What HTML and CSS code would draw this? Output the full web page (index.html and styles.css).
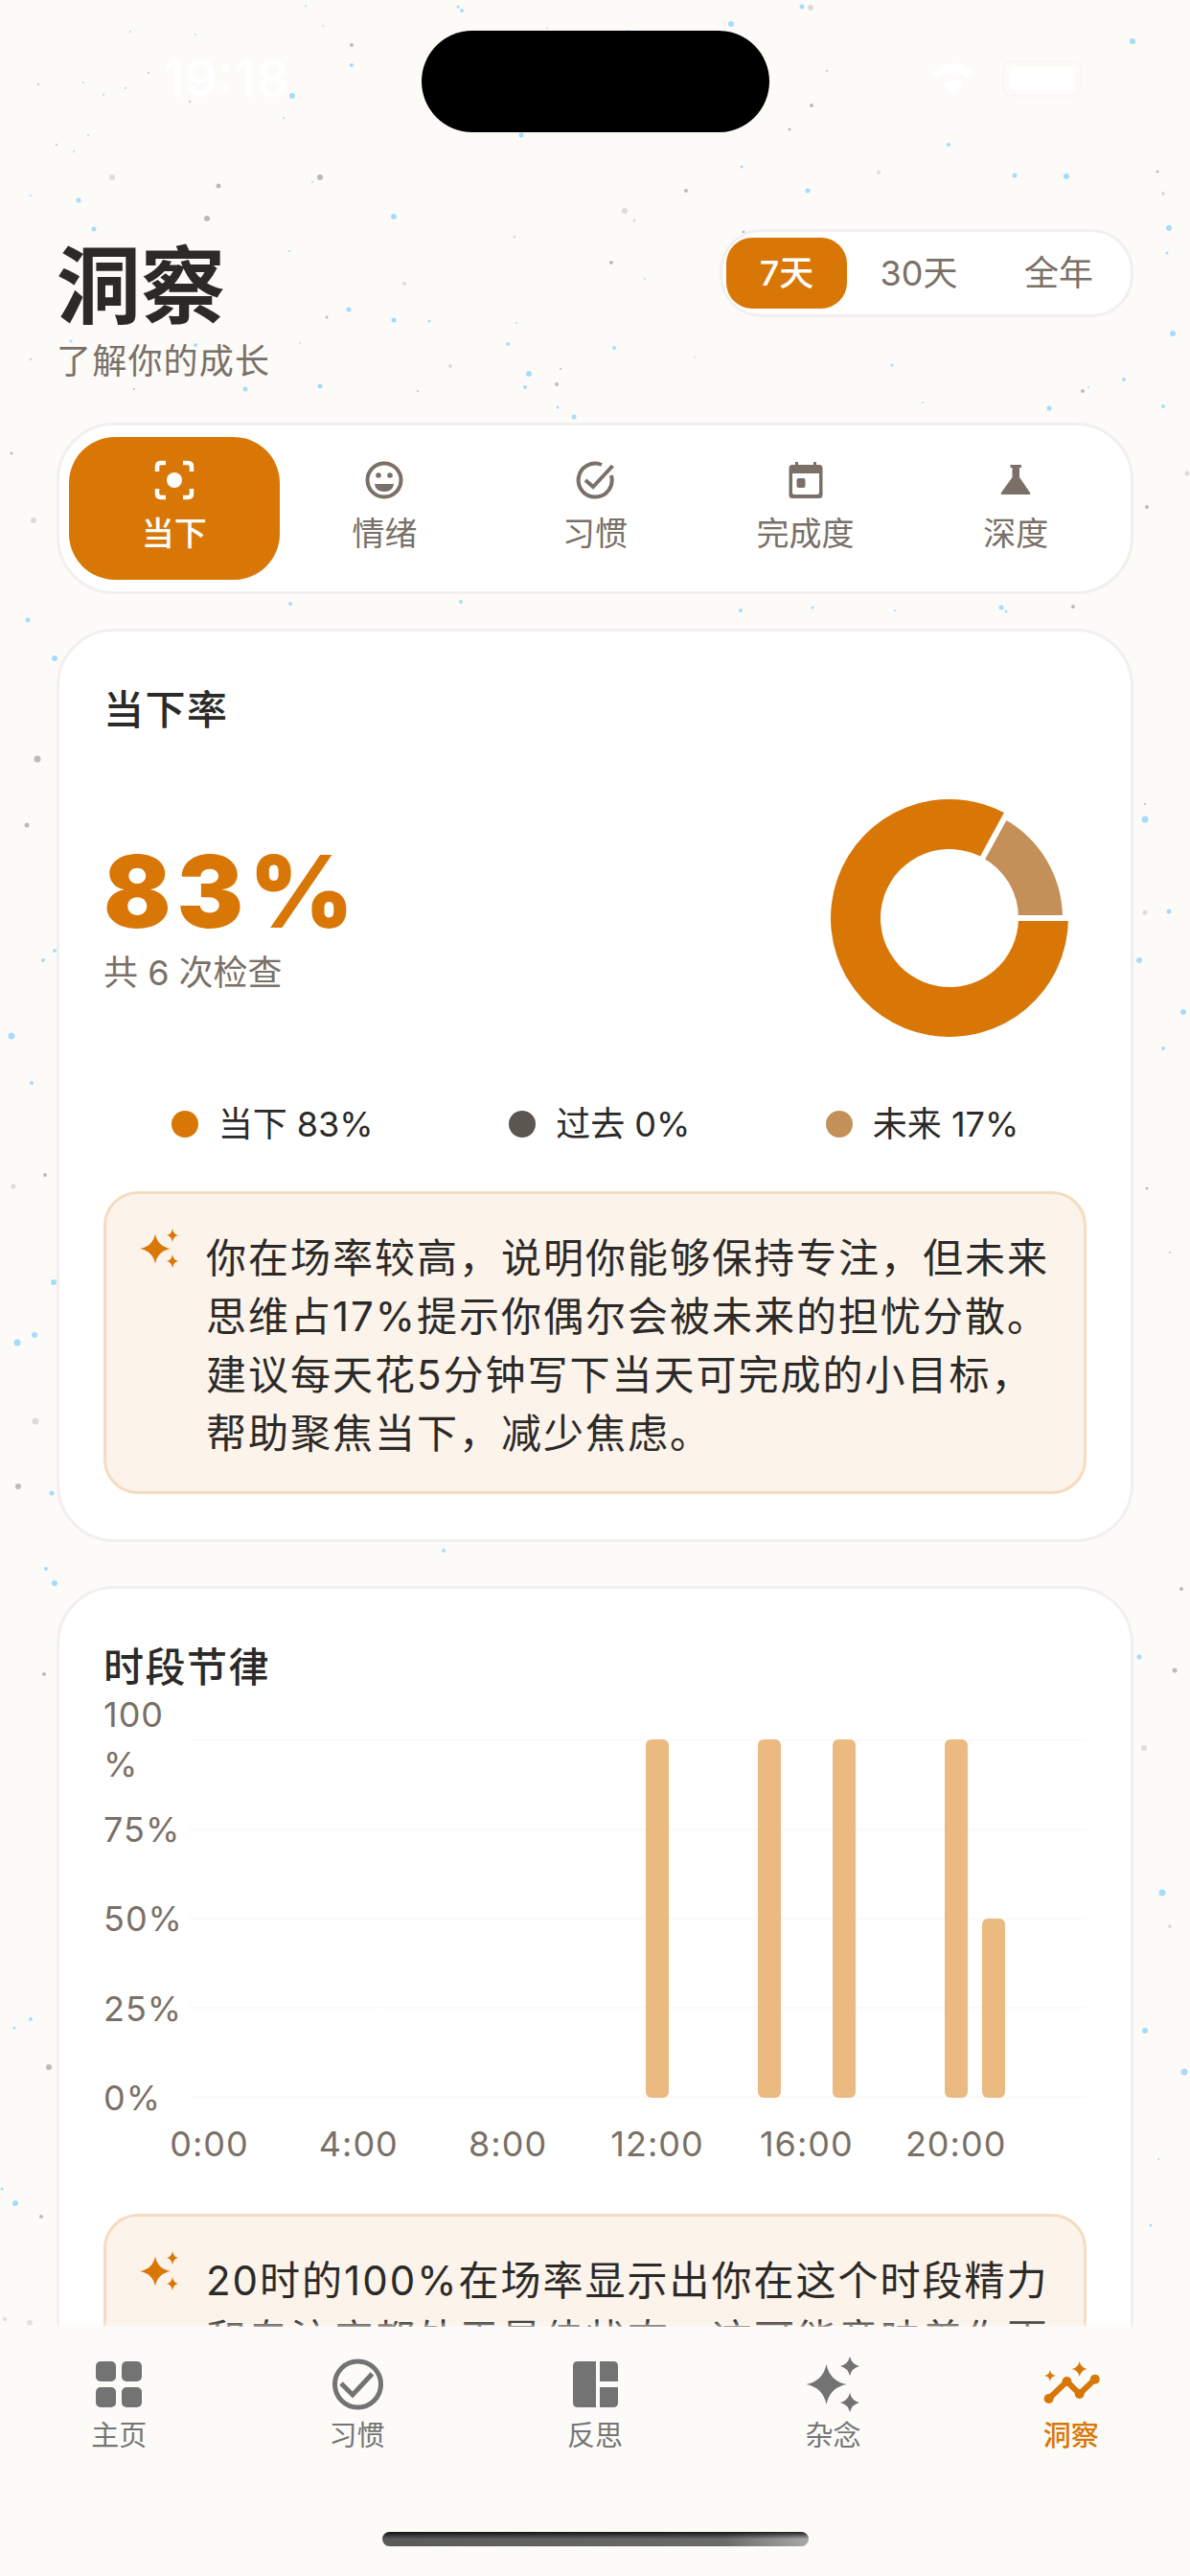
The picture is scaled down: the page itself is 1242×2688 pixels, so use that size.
FILE: index.html
```html
<!DOCTYPE html>
<html lang="zh-CN">
<head>
    <meta charset="UTF-8">
    <meta name="viewport" content="width=device-width, initial-scale=1.0">
    <title>洞察</title>
    <link rel="stylesheet" href="styles.css">
</head>
<body>
    <!-- background speckles -->
    <svg class="speckles" viewBox="0 0 1242 2688">
        <g class="blue">
            <circle cx="319" cy="6" r="1"/><circle cx="478" cy="7" r="1.5"/><circle cx="482" cy="11" r="2"/><circle cx="837" cy="7" r="2.5"/><circle cx="763" cy="25" r="3"/><circle cx="136" cy="33" r="1"/><circle cx="204" cy="36" r="1"/><circle cx="367" cy="68" r="2"/><circle cx="655" cy="32" r="1"/><circle cx="1182" cy="43" r="3"/><circle cx="87" cy="86" r="1"/><circle cx="131" cy="92" r="1"/><circle cx="108" cy="99" r="1"/><circle cx="305" cy="100" r="3"/><circle cx="296" cy="123" r="1"/><circle cx="544" cy="141" r="2.5"/><circle cx="92" cy="141" r="1"/><circle cx="77" cy="158" r="1"/><circle cx="990" cy="151" r="2"/><circle cx="774" cy="174" r="1.5"/><circle cx="1059" cy="183" r="2.5"/><circle cx="1113" cy="184" r="3"/><circle cx="326" cy="190" r="1"/><circle cx="32" cy="204" r="1"/><circle cx="82" cy="209" r="2.5"/><circle cx="843" cy="199" r="2.5"/><circle cx="411" cy="226" r="3"/><circle cx="98" cy="239" r="2.5"/><circle cx="1220" cy="238" r="3"/><circle cx="1218" cy="264" r="1.5"/><circle cx="302" cy="262" r="1"/><circle cx="673" cy="291" r="1"/><circle cx="364" cy="323" r="2.5"/><circle cx="411" cy="334" r="2.5"/><circle cx="448" cy="335" r="1.5"/><circle cx="539" cy="337" r="1"/><circle cx="1224" cy="348" r="3"/><circle cx="74" cy="356" r="1.5"/><circle cx="204" cy="360" r="2"/><circle cx="530" cy="359" r="2"/><circle cx="641" cy="363" r="2"/><circle cx="552" cy="390" r="3"/><circle cx="931" cy="381" r="1.5"/><circle cx="1173" cy="396" r="2"/><circle cx="334" cy="403" r="2.5"/><circle cx="548" cy="404" r="2"/><circle cx="256" cy="406" r="2.5"/><circle cx="1136" cy="404" r="1"/>
            <circle cx="582" cy="425" r="1.5"/><circle cx="599" cy="435" r="2.5"/><circle cx="963" cy="420" r="1"/><circle cx="1095" cy="426" r="2.5"/><circle cx="303" cy="630" r="2"/><circle cx="481" cy="628" r="2"/><circle cx="773" cy="637" r="2"/><circle cx="848" cy="634" r="1.5"/><circle cx="934" cy="637" r="1"/><circle cx="1045" cy="634" r="2.5"/><circle cx="1050" cy="638" r="1.5"/><circle cx="463" cy="1618" r="2"/>
            <circle cx="29" cy="647" r="2.5"/><circle cx="57" cy="687" r="3"/><circle cx="45" cy="1002" r="2"/><circle cx="57" cy="992" r="2"/><circle cx="12" cy="1081" r="3.5"/><circle cx="33" cy="1130" r="2"/><circle cx="56" cy="1338" r="3"/><circle cx="18" cy="1401" r="3.5"/><circle cx="36" cy="1393" r="3"/><circle cx="54" cy="1558" r="2.5"/><circle cx="48" cy="1637" r="2"/><circle cx="57" cy="1652" r="3"/><circle cx="15" cy="2116" r="1.5"/><circle cx="32" cy="2107" r="2"/><circle cx="2" cy="2284" r="1.5"/><circle cx="16" cy="2299" r="3"/>
            <circle cx="1214" cy="424" r="2"/><circle cx="1195" cy="855" r="3.5"/><circle cx="1220" cy="951" r="2.5"/><circle cx="1189" cy="1002" r="3"/><circle cx="1235" cy="1056" r="3"/><circle cx="1214" cy="1094" r="2"/><circle cx="1189" cy="1729" r="2.5"/><circle cx="1213" cy="1975" r="3.5"/><circle cx="1195" cy="2119" r="3"/><circle cx="1236" cy="2162" r="3.5"/><circle cx="1209" cy="2253" r="1"/><circle cx="1201" cy="2322" r="1.5"/>
        </g>
        <g class="gray">
            <circle cx="367" cy="47" r="2"/><circle cx="337" cy="27" r="0.8"/><circle cx="571" cy="29" r="0.8"/><circle cx="155" cy="76" r="1"/><circle cx="40" cy="88" r="1"/><circle cx="198" cy="106" r="1"/><circle cx="863" cy="74" r="1"/><circle cx="847" cy="110" r="2"/><circle cx="824" cy="135" r="1.5"/><circle cx="59" cy="151" r="1"/><circle cx="1208" cy="179" r="1.5"/><circle cx="228" cy="194" r="2.5"/><circle cx="334" cy="185" r="3"/><circle cx="716" cy="199" r="2"/><circle cx="216" cy="228" r="3"/><circle cx="776" cy="242" r="1.5"/><circle cx="638" cy="274" r="2"/><circle cx="341" cy="331" r="1.5"/><circle cx="32" cy="375" r="1"/><circle cx="585" cy="385" r="1"/><circle cx="581" cy="401" r="2"/><circle cx="140" cy="406" r="1"/><circle cx="436" cy="408" r="1"/><circle cx="1130" cy="408" r="2"/><circle cx="1120" cy="633" r="2"/>
            <circle cx="12" cy="473" r="1.5"/><circle cx="39" cy="792" r="3.5"/><circle cx="28" cy="861" r="2.5"/><circle cx="47" cy="1226" r="2"/><circle cx="19" cy="1551" r="3"/><circle cx="46" cy="1747" r="2"/><circle cx="51" cy="2157" r="3"/><circle cx="43" cy="2313" r="2"/>
            <circle cx="1197" cy="529" r="2"/><circle cx="1195" cy="839" r="1"/><circle cx="1197" cy="1240" r="1.5"/><circle cx="1221" cy="1307" r="1"/><circle cx="1233" cy="1658" r="2"/><circle cx="1226" cy="1743" r="2.5"/>
        </g>
        <g class="pale">
            <circle cx="846" cy="8" r="3"/><circle cx="917" cy="180" r="2"/><circle cx="117" cy="185" r="3"/><circle cx="1214" cy="202" r="2"/><circle cx="652" cy="220" r="3"/><circle cx="662" cy="230" r="1.5"/><circle cx="537" cy="247" r="1.5"/><circle cx="422" cy="296" r="2"/><circle cx="313" cy="358" r="1"/><circle cx="470" cy="382" r="2"/><circle cx="725" cy="373" r="1"/>
            <circle cx="35" cy="543" r="3"/><circle cx="14" cy="1238" r="2.5"/><circle cx="37" cy="1483" r="3.5"/><circle cx="5" cy="2420" r="2"/><circle cx="31" cy="2424" r="3"/>
            <circle cx="1239" cy="494" r="2.5"/><circle cx="1195" cy="952" r="2.5"/><circle cx="1194" cy="1824" r="3"/><circle cx="1221" cy="2010" r="2"/>
        </g>
    </svg>

    <div class="status-bar">
        <div class="status-time">19:18</div>
        <div class="island"></div>
        <div class="status-icons">
            <svg class="wifi" viewBox="0 0 54 38">
                <path d="M27 38 L16 25 Q27 16 38 25Z M11 19 L5 12 Q27 -6 49 12 L43 19 Q27 6 11 19Z"/>
            </svg>
            <div class="battery"><div class="battery-fill"></div></div>
        </div>
    </div>

    <main class="content">
        <header class="page-header">
            <div>
                <h1>洞察</h1>
                <p class="subtitle">了解你的成长</p>
            </div>
            <div class="range">
                <div class="range-item active">7天</div>
                <div class="range-item">30天</div>
                <div class="range-item">全年</div>
            </div>
        </header>

        <nav class="tabs">
            <div class="tab active">
                <svg class="tab-icon" viewBox="0 0 40 40">
                    <path class="line" d="M2 11 V6 Q2 2 6 2 H11 M29 2 H34 Q38 2 38 6 V11 M38 29 V34 Q38 38 34 38 H29 M11 38 H6 Q2 38 2 34 V29"/>
                    <circle cx="20" cy="20" r="8"/>
                </svg>
                <span>当下</span>
            </div>
            <div class="tab">
                <svg class="tab-icon" viewBox="0 0 40 40">
                    <circle class="line" cx="20" cy="20" r="17.5"/>
                    <circle cx="14" cy="15" r="2.8"/>
                    <circle cx="26" cy="15" r="2.8"/>
                    <path d="M10 24 H30 Q29 32 20 32 Q11 32 10 24Z"/>
                </svg>
                <span>情绪</span>
            </div>
            <div class="tab">
                <svg class="tab-icon" viewBox="0 0 40 40">
                    <path class="line" d="M36.9 15 A17.5 17.5 0 1 1 27 4"/>
                    <path class="line" d="M10 20 L18 27 L38.5 5"/>
                </svg>
                <span>习惯</span>
            </div>
            <div class="tab">
                <svg class="tab-icon" viewBox="0 0 40 40">
                    <path fill-rule="evenodd" d="M9 1 H12 V4 H28 V1 H31 V4 H34 Q37.5 4 37.5 7.500 V35.500 Q37.500 39 34 39 H6 Q2.500 39 2.500 35.500 V7.500 Q2.500 4 6 4 H9Z M6 13 V33 Q6 35 8 35 H32 Q34 35 34 33 V13Z"/>
                    <rect x="10.500" y="18" width="9" height="10" rx="2"/>
                </svg>
                <span>完成度</span>
            </div>
            <div class="tab">
                <svg class="tab-icon" viewBox="0 0 40 40">
                    <path d="M14.500 4 H26 V7 H24 V17 L35 33 Q36 35 34 35 H6 Q4 35 5 33 L16.500 17 V7 H14.500Z"/>
                </svg>
                <span>深度</span>
            </div>
        </nav>

        <section class="card">
            <h2>当下率</h2>
            <div class="hero">
                <div>
                    <div class="hero-value">83%</div>
                    <div class="hero-sub">共 6 次检查</div>
                </div>
                <svg class="donut" viewBox="0 0 248 248">
                    <path class="now" d="M248 124 A124 124 0 1 1 183.700 15.300 L158.700 60.900 A72 72 0 1 0 196 124Z"/>
                    <path class="future" d="M180.900 20.600 A118 118 0 0 1 242 124 L196 124 A72 72 0 0 0 158.700 60.900Z"/>
                    <path class="gap" d="M190 124 H250 M155.300 67.100 L186 11"/>
                </svg>
            </div>
            <div class="legend">
                <div class="legend-item"><i class="dot now-dot"></i>当下 83%</div>
                <div class="legend-item"><i class="dot past-dot"></i>过去 0%</div>
                <div class="legend-item"><i class="dot future-dot"></i>未来 17%</div>
            </div>
            <div class="insight">
                <svg class="sparkle" viewBox="0 0 42 42">
                    <path d="M17 5.500 Q19.500 18.500 33 21 Q19.500 23.500 17 36.500 Q14.500 23.500 1 21 Q14.500 18.500 17 5.500Z"/>
                    <path d="M35 0 Q36 6 41 7 Q36 8 35 14 Q34 8 29 7 Q34 6 35 0Z"/>
                    <path d="M35 27 Q36 33 41 34 Q36 35 35 41 Q34 35 29 34 Q34 33 35 27Z"/>
                </svg>
                <p>你在场率较高，说明你能够保持专注，但未来思维占17%提示你偶尔会被未来的担忧分散。建议每天花5分钟写下当天可完成的小目标，帮助聚焦当下，减少焦虑。</p>
            </div>
        </section>

        <section class="card">
            <h2>时段节律</h2>
            <div class="chart">
                <div class="y-axis">
                    <div class="tick"><span>100<br>%</span></div>
                    <div class="tick"><span>75%</span></div>
                    <div class="tick"><span>50%</span></div>
                    <div class="tick"><span>25%</span></div>
                    <div class="tick"><span>0%</span></div>
                </div>
                <div class="plot">
                    <div class="bar" style="grid-column:13;height:100%"></div>
                    <div class="bar" style="grid-column:16;height:100%"></div>
                    <div class="bar" style="grid-column:18;height:100%"></div>
                    <div class="bar" style="grid-column:21;height:100%"></div>
                    <div class="bar" style="grid-column:22;height:50%"></div>
                </div>
                <div class="x-axis">
                    <span style="grid-column:1">0:00</span>
                    <span style="grid-column:5">4:00</span>
                    <span style="grid-column:9">8:00</span>
                    <span style="grid-column:13">12:00</span>
                    <span style="grid-column:17">16:00</span>
                    <span style="grid-column:21">20:00</span>
                </div>
            </div>
            <div class="insight">
                <svg class="sparkle" viewBox="0 0 42 42">
                    <path d="M17 5.500 Q19.500 18.500 33 21 Q19.500 23.500 17 36.500 Q14.500 23.500 1 21 Q14.500 18.500 17 5.500Z"/>
                    <path d="M35 0 Q36 6 41 7 Q36 8 35 14 Q34 8 29 7 Q34 6 35 0Z"/>
                    <path d="M35 27 Q36 33 41 34 Q36 35 35 41 Q34 35 29 34 Q34 33 35 27Z"/>
                </svg>
                <p>20时的100%在场率显示出你在这个时段精力和专注度都处于最佳状态，这可能意味着你更</p>
            </div>
        </section>
    </main>

    <footer class="tabbar">
        <div class="tabbar-items">
            <div class="tabbar-item">
                <svg viewBox="0 0 56 56">
                    <rect x="4" y="5" width="21" height="21" rx="5"/>
                    <rect x="31" y="5" width="21" height="21" rx="5"/>
                    <rect x="4" y="32" width="21" height="21" rx="5"/>
                    <rect x="31" y="32" width="21" height="21" rx="5"/>
                </svg>
                <span>主页</span>
            </div>
            <div class="tabbar-item">
                <svg viewBox="0 0 56 56">
                    <circle class="line" cx="28.500" cy="29" r="24"/>
                    <path class="line" d="M11 28 L23 40 L43.500 18"/>
                </svg>
                <span>习惯</span>
            </div>
            <div class="tabbar-item">
                <svg viewBox="0 0 56 56">
                    <path d="M10 5 H29 V53 H10 Q5 53 5 48 V10 Q5 5 10 5Z"/>
                    <path d="M33 5 H47 Q52 5 52 10 V26 H33Z"/>
                    <path d="M33 32 H52 V48 Q52 53 47 53 H33Z"/>
                </svg>
                <span>反思</span>
            </div>
            <div class="tabbar-item">
                <svg viewBox="0 0 56 56">
                    <path d="M21.500 8 Q25 25.500 42.500 29 Q25 32.500 21.500 50 Q18 32.500 0.500 29 Q18 25.500 21.500 8Z"/>
                    <path d="M46 0 Q48 8 56 10 Q48 12 46 20 Q44 12 36 10 Q44 8 46 0Z"/>
                    <path d="M46 38 Q48 46 56 48 Q48 50 46 58 Q44 50 36 48 Q44 46 46 38Z"/>
                </svg>
                <span>杂念</span>
            </div>
            <div class="tabbar-item active">
                <svg viewBox="0 0 56 56">
                    <path class="line" d="M4.600 44 L23.500 26 L36.700 39 L52.800 23.700"/>
                    <circle cx="4.600" cy="44" r="5"/>
                    <circle cx="23.500" cy="26" r="5"/>
                    <circle cx="36.700" cy="39" r="5"/>
                    <circle cx="52.800" cy="23.700" r="5"/>
                    <path d="M36.700 5 Q38 11.500 44.700 13 Q38 14.500 36.700 21 Q35.400 14.500 28.700 13 Q35.400 11.500 36.700 5Z"/>
                    <path d="M6 14 Q6.700 19.300 12 20 Q6.700 20.700 6 26 Q5.300 20.700 0 20 Q5.300 19.300 6 14Z"/>
                </svg>
                <span>洞察</span>
            </div>
        </div>
        <div class="home-bar"></div>
    </footer>
</body>
</html>
```

FILE: styles.css
```css
/* General Styles */
* {
    box-sizing: border-box;
}
body {
    position: relative;
    display: flex;
    flex-direction: column;
    width: 1242px;
    height: 2688px;
    margin: 0;
    overflow: hidden;
    background-color: #fcfbf8;
    color: #2b2a28;
    font-family: Inter, "Noto Sans CJK SC", sans-serif;
}
h1, h2, p {
    margin: 0;
}
svg {
    display: block;
    overflow: visible;
}
.speckles {
    position: absolute;
    top: 0;
    left: 0;
    width: 1242px;
    height: 2688px;
}
.speckles .blue { fill: #a6dcfa; }
.speckles .gray { fill: #bdbbb6; }
.speckles .pale { fill: #dedcd7; }

/* Status bar */
.status-bar {
    position: relative;
    display: grid;
    grid-template-columns: 440px 363px 1fr;
    height: 106px;
    margin-top: 32px;
    flex-shrink: 0;
    color: #fff;
}
.status-time {
    padding: 20px 0 0 170px;
    font-size: 54px;
    font-weight: 600;
    line-height: 60px;
}
.island {
    background: #000;
    border-radius: 53px;
}
.status-icons {
    display: flex;
    gap: 24px;
    padding: 31px 0 0 165px;
}
.wifi {
    width: 54px;
    height: 38px;
    fill: #fff;
}
.battery {
    width: 83px;
    height: 38px;
    padding: 5px;
    border: 2px solid #f8f7f4;
    border-radius: 10px;
}
.battery-fill {
    height: 100%;
    background: #fff;
    border-radius: 5px;
}

/* Page */
.content {
    position: relative;
    flex: 1;
    min-height: 0;
    overflow: hidden;
    padding: 101px 59px 0;
}
.page-header {
    display: flex;
    justify-content: space-between;
    align-items: flex-start;
}
h1 {
    margin-top: 9px;
    font-size: 88px;
    font-weight: 700;
    line-height: 100px;
}
.subtitle {
    margin-top: 4px;
    font-size: 36px;
    line-height: 50px;
    letter-spacing: 1.2px;
    color: #7a7067;
}
.range {
    display: grid;
    grid-template-columns: 126px 150px 142px;
    height: 92px;
    padding: 6px 4px;
    background: #fff;
    border: 3px solid #f1f0ee;
    border-radius: 44px;
}
.range-item {
    font-size: 36px;
    line-height: 74px;
    text-align: center;
    color: #7a7067;
}
.range-item.active {
    background: #d97706;
    border-radius: 27px;
    color: #fff;
    font-weight: 500;
}

/* Top tabs */
.tabs {
    display: grid;
    grid-template-columns: repeat(5, 1fr);
    margin-top: 39px;
    padding: 12px 10px;
    background: #fff;
    border: 3px solid #f1f0ee;
    border-radius: 60px;
}
.tab {
    display: flex;
    flex-direction: column;
    align-items: center;
    justify-content: center;
    gap: 9px;
    height: 149px;
    font-size: 34px;
    line-height: 50px;
    color: #7a7067;
    border-radius: 48px;
}
.tab span {
    padding-top: 2px;
    margin-bottom: -2px;
}
.tab-icon {
    width: 40px;
    height: 40px;
    fill: #7a7067;
}
.tab-icon .line {
    fill: none;
    stroke: #7a7067;
    stroke-width: 4;
}
.tab.active {
    background: #d97706;
    color: #fff;
    font-weight: 500;
}
.tab.active .tab-icon {
    fill: #fff;
}
.tab.active .tab-icon .line {
    stroke: #fff;
    stroke-width: 4.5;
}

/* Cards */
.card {
    margin-top: 36px;
    padding: 52px 46px 47px;
    background: #fff;
    border: 3px solid #f1f0ee;
    border-radius: 60px;
}
.card + .card {
    margin-top: 46px;
}
h2 {
    font-size: 42px;
    font-weight: 500;
    line-height: 60px;
    letter-spacing: 1.5px;
}
.hero {
    display: flex;
    justify-content: space-between;
    align-items: center;
    margin-top: 63px;
    padding-right: 19px;
}
.hero-value {
    font-size: 104px;
    font-weight: 900;
    line-height: 108px;
    letter-spacing: 6px;
    color: #d97706;
}
.hero-sub {
    margin-top: 6px;
    font-size: 36px;
    line-height: 50px;
    color: #7a7067;
}
.donut {
    width: 248px;
    height: 248px;
}
.donut .now { fill: #d97706; }
.donut .future { fill: #c4905a; }
.donut .gap {
    fill: none;
    stroke: #fff;
    stroke-width: 6;
}
.legend {
    display: flex;
    justify-content: space-around;
    margin-top: 65px;
}
.legend-item {
    display: flex;
    align-items: center;
    gap: 21px;
    font-size: 36px;
    line-height: 52px;
}
.dot {
    width: 28px;
    height: 28px;
    border-radius: 50%;
}
.now-dot { background: #d97706; }
.past-dot { background: #5c5650; }
.future-dot { background: #c4905a; }

/* Insight box */
.insight {
    display: flex;
    align-items: flex-start;
    gap: 28px;
    margin-top: 44px;
    padding: 36px 20px 30px 34px;
    background: #fcf3ea;
    border: 3px solid #f5dcc0;
    border-radius: 36px;
}
.sparkle {
    flex-shrink: 0;
    width: 42px;
    height: 42px;
    fill: #d97706;
}
.insight p {
    font-size: 42px;
    line-height: 61px;
    letter-spacing: 2px;
}

/* Hourly chart */
.chart {
    display: grid;
    grid-template-columns: 91px minmax(0, 1fr);
    margin-top: 45px;
}
.chart + .insight {
    margin-top: 47px;
}
.y-axis {
    display: flex;
    flex-direction: column;
    justify-content: space-between;
    height: 374px;
}
.tick {
    display: flex;
    align-items: center;
    height: 0;
    font-size: 36px;
    line-height: 52px;
    letter-spacing: 1px;
    color: #7a7067;
}
.plot {
    display: grid;
    grid-template-columns: repeat(24, minmax(0, 1fr));
    height: 374px;
    background-image:
        repeating-linear-gradient(to bottom, #fbfaf9 0, #fbfaf9 2px, transparent 2px, transparent 93px),
        repeating-linear-gradient(to right, #fdfdfc 0, #fdfdfc 1px, transparent 1px, transparent 39px);
}
.bar {
    grid-row: 1;
    align-self: end;
    justify-self: center;
    width: 24px;
    background: #ebba80;
    border-radius: 6px;
}
.x-axis {
    grid-column: 2;
    display: grid;
    grid-template-columns: repeat(24, minmax(0, 1fr));
    margin-top: 22px;
    font-size: 36px;
    line-height: 52px;
    letter-spacing: 1px;
    color: #7a7067;
}
.x-axis span {
    display: flex;
    justify-content: center;
    min-width: 0;
    white-space: nowrap;
}

/* Bottom tab bar */
.tabbar {
    position: relative;
    height: 260px;
    flex-shrink: 0;
    background: #fcfbf8;
    box-shadow: 0 -2px 6px rgba(252, 251, 248, 0.8);
}
.tabbar-items {
    display: grid;
    grid-template-columns: repeat(5, 1fr);
    padding-top: 31px;
}
.tabbar-item {
    display: flex;
    flex-direction: column;
    align-items: center;
    gap: 6px;
    font-size: 29px;
    line-height: 42px;
    color: #757575;
}
.tabbar-item svg {
    width: 56px;
    height: 56px;
    fill: #737373;
}
.tabbar-item .line {
    fill: none;
    stroke: #737373;
    stroke-width: 5;
}
.tabbar-item.active {
    color: #d97706;
    font-weight: 500;
}
.tabbar-item.active svg {
    fill: #d97706;
}
.tabbar-item.active .line {
    stroke: #d97706;
    stroke-width: 6;
}
.home-bar {
    width: 445px;
    height: 15px;
    margin: 79px auto 0;
    border-radius: 8px;
    background:
        linear-gradient(to bottom, rgba(0, 0, 0, 0.8) 0, rgba(0, 0, 0, 0) 50%),
        linear-gradient(to right, #5a5a5a 0, #6a6a6a 80%, #a8a8a8 100%);
}
```
